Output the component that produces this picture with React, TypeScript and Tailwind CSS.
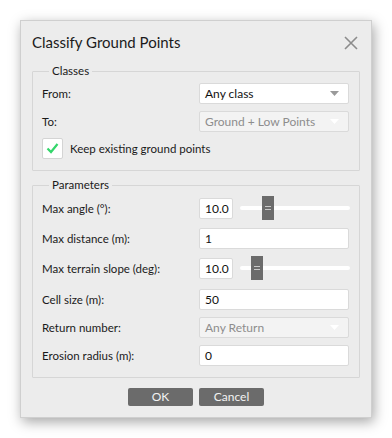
import React from "react";

const font = { fontFamily: 'Lato, "Noto Sans", sans-serif' };

const Caret = ({ disabled }: { disabled?: boolean }) => (
  <svg width="9" height="5" viewBox="0 0 9 5" className="shrink-0">
    <path d="M0 0 L9 0 L4.5 5 Z" fill={disabled ? "#ffffff" : "#9a9a9a"} />
  </svg>
);

const Select = ({ value, disabled }: { value: string; disabled?: boolean }) => (
  <div
    className={`flex h-[21px] w-[150px] items-center justify-between rounded-[2px] border border-[#dadada] pl-[5px] pr-[9px] text-[12px] ${
      disabled ? "bg-[#f3f3f3] text-[#8d8d8d]" : "bg-white text-[#111]"
    }`}
  >
    <span>{value}</span>
    <Caret disabled={disabled} />
  </div>
);

const TextInput = ({ value, w = "w-[150px]" }: { value: string; w?: string }) => (
  <div className={`flex h-[21px] ${w} items-center rounded-[2px] border border-[#dadada] bg-white pl-[5px] text-[12px] text-[#111]`}>
    {value}
  </div>
);

const Slider = ({ pos }: { pos: number }) => (
  <div className="relative ml-[7px] h-[21px] w-[110px]">
    <div className="absolute left-0 right-0 top-[8px] h-[4px] rounded-full bg-white" />
    <div
      className="absolute top-[-2px] flex h-[24px] w-[12px] flex-col items-center justify-center gap-[2px] bg-[#6b6b6b]"
      style={{ left: pos }}
    >
      <div className="h-[1px] w-[6px] bg-[#c8c8c8]" />
      <div className="h-[1px] w-[6px] bg-[#c8c8c8]" />
    </div>
  </div>
);

const Row = ({ label, className = "", children }: { label: string; className?: string; children: React.ReactNode }) => (
  <div className={`flex h-[21px] items-center ${className}`}>
    <span className="w-[157px] text-[11.5px] text-[#1a1a1a]">{label}</span>
    <div className="flex items-center">{children}</div>
  </div>
);

export default function App() {
  return (
    <div className="h-[438px] w-[392px] bg-white pl-[20px] pt-[20px]" style={font}>
      <div className="flex h-[398px] w-[352px] flex-col border border-[#cfcfcf] bg-[#ececec] px-[11px] shadow-[2px_4px_12px_rgba(0,0,0,0.35)]">
        <div className="flex h-[43px] shrink-0 items-center justify-between">
          <span className="text-[15px] text-[#1b1b1b]">Classify Ground Points</span>
          <svg width="14" height="14" viewBox="0 0 14 14" className="mr-[2px]">
            <path d="M1 1 L13 13 M13 1 L1 13" stroke="#8c8c8c" strokeWidth="1.6" />
          </svg>
        </div>

        <fieldset className="h-[107px] shrink-0 rounded-[1px] border border-[#d6d6d6] pl-[9px]">
          <legend className="ml-[7px] px-[3px] text-[11.5px] leading-[14px] text-[#1a1a1a]">Classes</legend>
          <Row label="From:" className="mt-[5px]">
            <Select value="Any class" />
          </Row>
          <Row label="To:" className="mt-[7px]">
            <Select value="Ground + Low Points" disabled />
          </Row>
          <div className="mt-[6px] flex items-center">
            <div className="flex h-[21px] w-[21px] items-center justify-center rounded-[2px] border border-[#d4d4d4] bg-white">
              <svg width="13" height="11" viewBox="0 0 13 11">
                <path d="M1.5 5.5 L5 9 L11.5 1" stroke="#34d66b" strokeWidth="2.2" fill="none" />
              </svg>
            </div>
            <span className="ml-[7px] text-[11.5px] text-[#1a1a1a]">Keep existing ground points</span>
          </div>
        </fieldset>

        <fieldset className="mt-[7px] h-[200px] shrink-0 rounded-[1px] border border-[#d6d6d6] pl-[9px]">
          <legend className="ml-[7px] px-[3px] text-[11.5px] leading-[14px] text-[#1a1a1a]">Parameters</legend>
          <Row label="Max angle (°):" className="mt-[6px]">
            <TextInput value="10.0" w="w-[34px]" />
            <Slider pos={22} />
          </Row>
          <Row label="Max distance (m):" className="mt-[9px]">
            <TextInput value="1" />
          </Row>
          <Row label="Max terrain slope (deg):" className="mt-[9px]">
            <TextInput value="10.0" w="w-[34px]" />
            <Slider pos={11} />
          </Row>
          <Row label="Cell size (m):" className="mt-[10px]">
            <TextInput value="50" />
          </Row>
          <Row label="Return number:" className="mt-[7px]">
            <Select value="Any Return" disabled />
          </Row>
          <Row label="Erosion radius (m):" className="mt-[7px]">
            <TextInput value="0" />
          </Row>
        </fieldset>

        <div className="mt-[10px] flex justify-center gap-[6px]">
          <button className="h-[18px] w-[65px] rounded-[2px] bg-[#6b6b6b] text-[12px] leading-none text-[#f2f2f2]">OK</button>
          <button className="h-[18px] w-[65px] rounded-[2px] bg-[#6b6b6b] text-[12px] leading-none text-[#f2f2f2]">Cancel</button>
        </div>
      </div>
    </div>
  );
}
